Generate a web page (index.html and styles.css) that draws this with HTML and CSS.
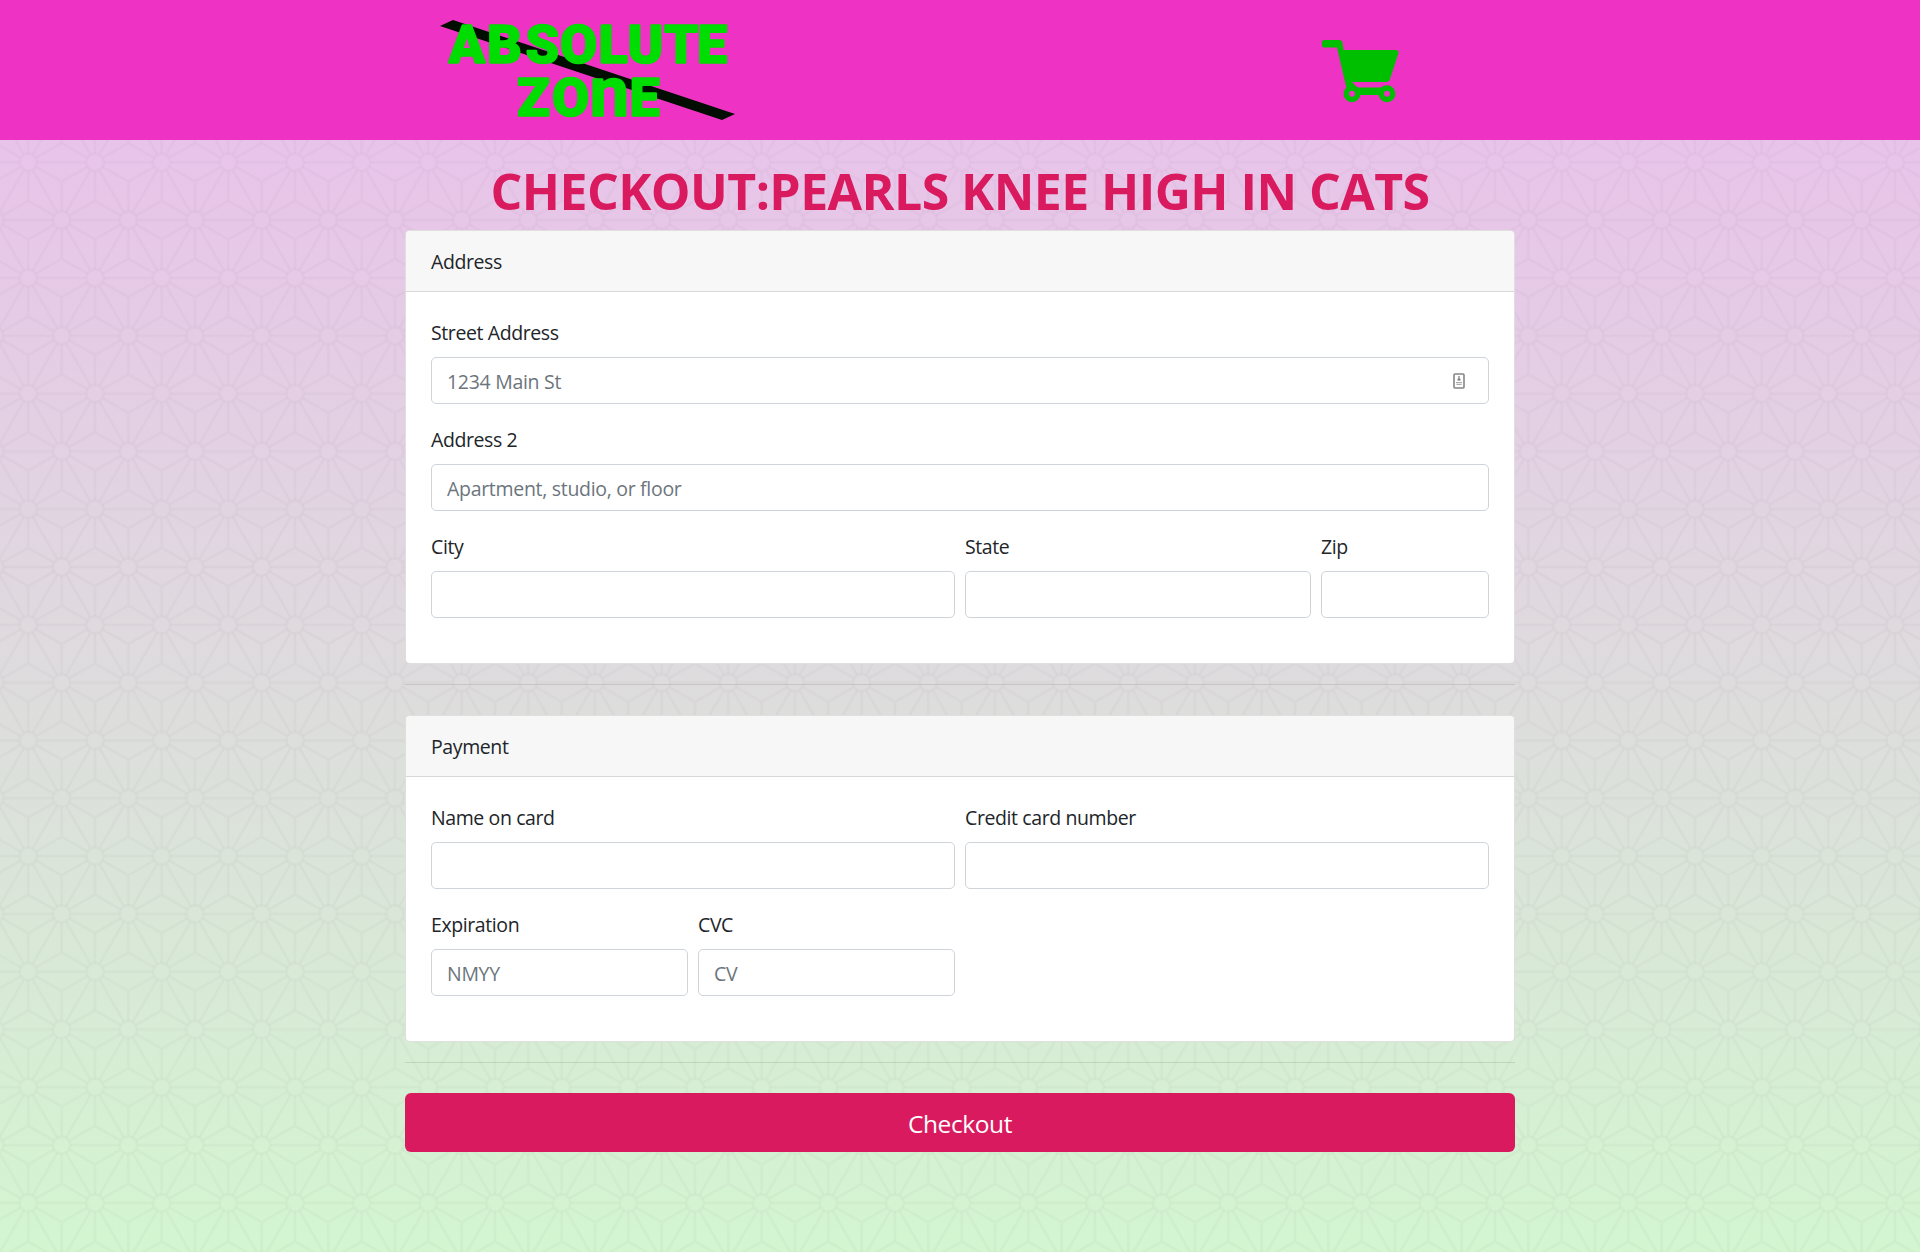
FILE: index.html
```html
<!DOCTYPE html>
<html lang="en">
<head>
<meta charset="utf-8">
<title>Absolute Zone - Checkout</title>
<link rel="stylesheet" href="styles.css">
</head>
<body>
<svg class="backdrop" width="100%" height="100%" aria-hidden="true">
  <defs>
    <pattern id="asanoha" width="66.667" height="115.63" patternUnits="userSpaceOnUse" patternTransform="translate(28.3 162.3)">
      <path d="M9 0H57.667M4.5 7.8L28.8 50M62.17 7.8L37.87 50M0 9V38.5M33.33 48.8V19.27M7.8 4.5L33.33 19.27L58.87 4.5M0 38.5L25.5 53.3M66.667 38.5L41.1 53.3M42.33 57.815H66.667M0 57.815H24.33M28.8 65.6L4.5 107.8M37.87 65.6L62.17 107.8M0 106.6V77.1M66.667 38.5V9M66.667 106.6V77.1M33.33 66.8V96.36M7.8 111.1L33.33 96.36L58.87 111.1M0 77.1L25.5 62.3M66.667 77.1L41.1 62.3M9 115.63H57.667"/>
      <circle cx="0" cy="0" r="8.6"/><circle cx="66.667" cy="0" r="8.6"/>
      <circle cx="0" cy="115.63" r="8.6"/><circle cx="66.667" cy="115.63" r="8.6"/>
      <circle cx="33.333" cy="57.815" r="8.6"/>
    </pattern>
  </defs>
  <rect width="100%" height="100%" fill="url(#asanoha)"/>
</svg>

<header class="topbar">
  <a class="logo" href="#">
    <svg width="300" height="110" viewBox="438 15 300 110" role="img" aria-label="Absolute Zone">
      <polygon points="440,26 453,20 735,114 722,120" fill="#000d00"/>
      <text y="63" x="448.5 487 525.5 560 598.5 627.500 664 697">ABSOLUTE</text>
      <text y="116" x="517 552 589.5 629.5">ZO<tspan class="tall">n</tspan>E</text>
    </svg>
  </a>
  <a class="cart" href="#" aria-label="Cart">
    <svg width="78" height="64" viewBox="1321 39 78 64">
      <path d="M1324 40H1339Q1342 40 1342.500 43L1343.500 50H1396Q1399 50.500 1398.500 53L1390 79Q1389 82 1387 82H1352L1357 87.500H1382V95H1357L1346.500 88L1337 47.500H1324Q1322 47.500 1322 45V42Q1322 40 1324 40Z" fill="#00bf00"/>
      <path d="M1352.500 82.300H1389L1388 83.700H1354Z" fill="#ee32c3"/>
      <circle cx="1352" cy="93.700" r="5.700"/>
      <circle cx="1387" cy="93.700" r="5.700"/>
    </svg>
  </a>
</header>

<main class="container">
  <h1>CHECKOUT:PEARLS KNEE HIGH IN CATS</h1>
  <form>
    <section class="card">
      <div class="card-header">Address</div>
      <div class="card-body">
        <div class="group">
          <label for="street">Street Address</label>
          <div class="field">
            <input id="street" placeholder="1234 Main St">
            <svg class="autofill" width="12" height="16" viewBox="0 0 12 16">
              <rect x="1" y="1" width="10" height="14" rx="1" fill="#fff" stroke="#858585" stroke-width="1.600"/>
              <path d="M6 3V5" stroke="#999" stroke-width="1.500"/>
              <path d="M4.300 7.500Q4.300 5 6 5T7.700 7.500Z" fill="#777"/>
              <path d="M3 9.700H9M3.500 11.500H8.500" stroke="#aaa" stroke-width="1.200"/>
            </svg>
          </div>
        </div>
        <div class="group">
          <label for="address2">Address 2</label>
          <input id="address2" placeholder="Apartment, studio, or floor">
        </div>
        <div class="row">
          <div class="group span-6"><label for="city">City</label><input id="city"></div>
          <div class="group span-4"><label for="state">State</label><input id="state"></div>
          <div class="group span-2"><label for="zip">Zip</label><input id="zip"></div>
        </div>
      </div>
    </section>
    <hr>
    <section class="card">
      <div class="card-header">Payment</div>
      <div class="card-body">
        <div class="row">
          <div class="group span-6"><label for="name">Name on card</label><input id="name"></div>
          <div class="group span-6"><label for="number">Credit card number</label><input id="number"></div>
        </div>
        <div class="row">
          <div class="group span-3"><label for="exp">Expiration</label><input id="exp" placeholder="NMYY"></div>
          <div class="group span-3"><label for="cvc">CVC</label><input id="cvc" placeholder="CV"></div>
        </div>
      </div>
    </section>
    <hr>
    <button type="button">Checkout</button>
  </form>
</main>
</body>
</html>
```
FILE: styles.css
```css
* { box-sizing: border-box; }

body {
  margin: 0;
  min-height: 1252px;
  position: relative;
  background: linear-gradient(#ebbded, #d3f6d0);
  color: #212529;
  font: 19.5px/30px "Open Sans", "Noto Sans", sans-serif;
  letter-spacing: -0.4px;
}

.backdrop {
  position: absolute;
  inset: 0;
  z-index: -1;
}
.backdrop path,
.backdrop circle {
  fill: none;
  stroke: rgba(90, 50, 90, 0.035);
  stroke-width: 2.6;
}

.topbar {
  height: 140px;
  padding: 15px 521px 0 438px;
  display: flex;
  justify-content: space-between;
  background: #ee32c3;
}
.logo, .logo svg, .cart svg { display: block; }
.logo text {
  font: 900 54px Roboto, sans-serif;
  letter-spacing: 0;
  fill: #00dd00;
  stroke: #00dd00;
  stroke-width: 1.6;
  stroke-linejoin: bevel;
}
.logo .tall { font-size: 71px; font-weight: 700; }
.cart { padding-top: 24px; }
.cart circle {
  fill: #ee32c3;
  stroke: #00bf00;
  stroke-width: 5.5;
}

.container {
  width: 1110px;
  margin: 0 auto;
  padding-top: 20px;
}

h1 {
  margin: 0 0 10px;
  padding-top: 1px;
  height: 60px;
  color: #d91a5f;
  font-size: 50px;
  font-weight: 700;
  line-height: 60px;
  letter-spacing: -0.57px;
  text-align: center;
  white-space: nowrap;
}

.card {
  border: 1px solid rgba(0, 0, 0, 0.125);
  border-radius: 5px;
  background: #fff;
}
.card-header {
  padding: 16px 25px 14px;
  border-bottom: 1px solid rgba(0, 0, 0, 0.125);
  border-radius: 4px 4px 0 0;
  background: #f7f7f7;
}
.card-body { padding: 25px; }

.group { margin-bottom: 20px; }
.row {
  display: grid;
  grid-template-columns: repeat(12, 1fr);
  column-gap: 10px;
}
.span-2 { grid-column: span 2; }
.span-3 { grid-column: span 3; }
.span-4 { grid-column: span 4; }
.span-6 { grid-column: span 6; }

label {
  display: block;
  padding-top: 1px;
  margin-bottom: 9px;
}
input {
  display: block;
  width: 100%;
  min-width: 0;
  height: 47px;
  padding: 8px 15px 6px;
  border: 1px solid #ced4da;
  border-radius: 5px;
  background: #fff;
  font: inherit;
  letter-spacing: -0.3px;
}
input::placeholder { color: #6c757d; opacity: 1; }

.field { position: relative; }
.autofill {
  position: absolute;
  top: 16px;
  right: 24px;
}

hr {
  height: 1px;
  margin: 20px 0 30px;
  border: 0;
  background: rgba(0, 0, 0, 0.1);
}

button {
  display: block;
  width: 100%;
  height: 59px;
  padding: 2px 0 0;
  border: 0;
  border-radius: 6px;
  background: #d91a5f;
  color: #fff;
  font: 24.5px/36px "Open Sans", "Noto Sans", sans-serif;
  letter-spacing: -0.4px;
}
```
